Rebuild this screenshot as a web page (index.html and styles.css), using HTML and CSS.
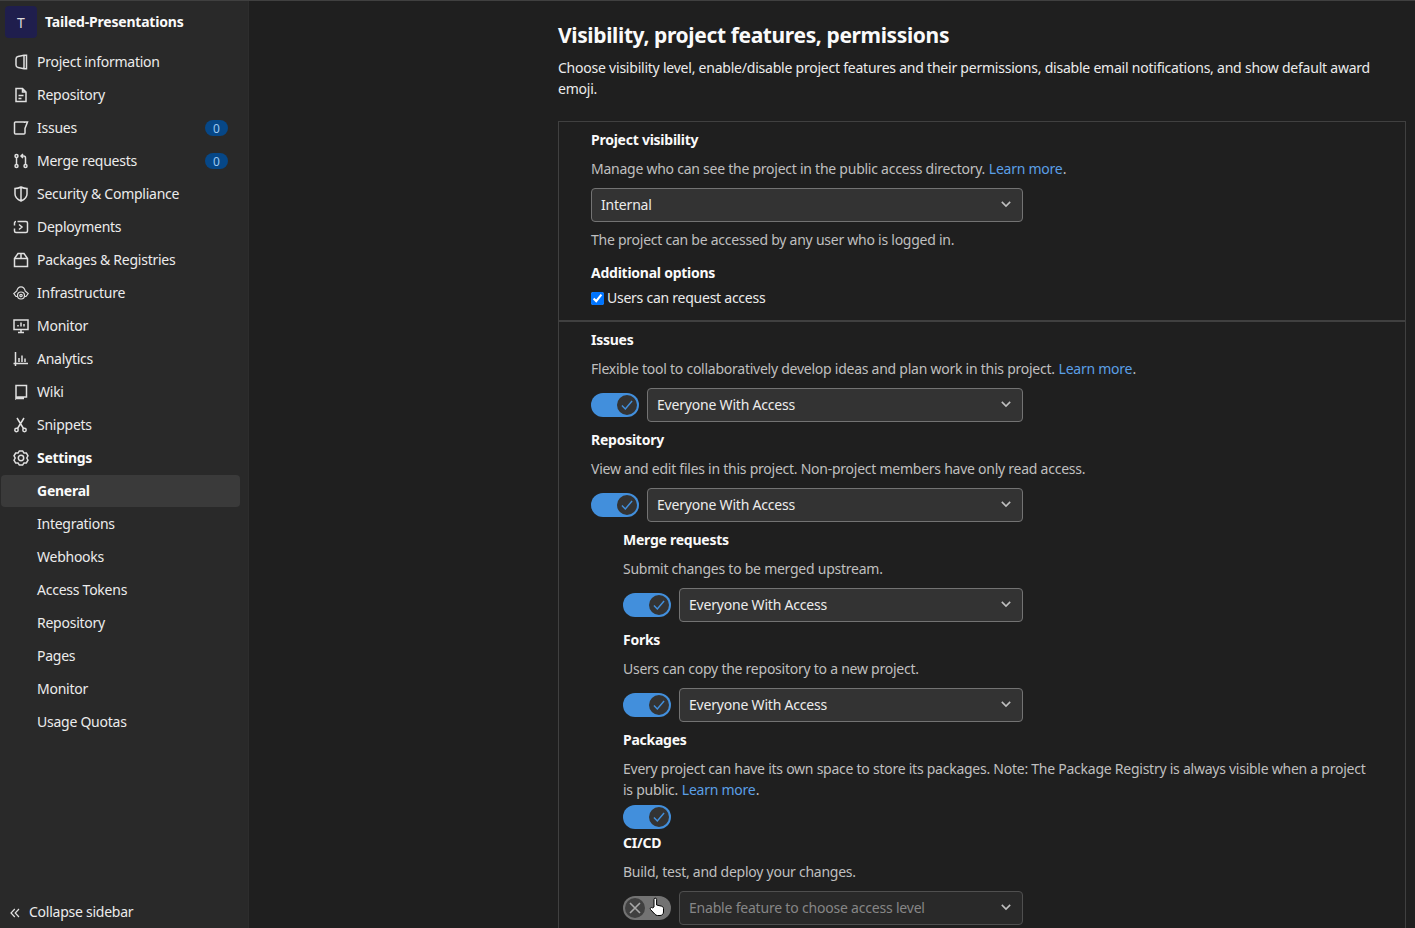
FILE: index.html
```html
<!DOCTYPE html>
<html lang="en">
<head>
  <meta charset="UTF-8">
  <title>General · Settings</title>
  <link rel="stylesheet" href="styles.css">
</head>
<body>
  <div class="layout">
    <aside class="sidebar">
      <div class="project">
        <span class="avatar">T</span>
        <span class="project-name">Tailed-Presentations</span>
      </div>
      <nav class="nav">
        <a class="nav-item"><svg class="icon" viewBox="0 0 16 16"><path d="M11 1.300h2.500v13.400H11L5 13.500c-1.500-.3-2-1-2-2.500V5c0-1.500.5-2.200 2-2.500zM11 1.300v13.400"/></svg>Project information</a>
        <a class="nav-item"><svg class="icon" viewBox="0 0 16 16"><path d="M3 1.500h6.500L13 5v9.500H3zM9.500 1.500V5H13M5.500 8.500h5M5.500 11.500h3"/></svg>Repository</a>
        <a class="nav-item"><svg class="icon" viewBox="0 0 16 16"><path d="M2.500 2H14.500L12 8.500V13a1 1 0 0 1-1 1H2.500a1 1 0 0 1-1-1V3a1 1 0 0 1 1-1zM11.500 2v1"/></svg>Issues<span class="badge">0</span></a>
        <a class="nav-item"><svg class="icon" viewBox="0 0 16 16"><circle cx="3.500" cy="3" r="1.500"/><circle cx="3.500" cy="13" r="1.500"/><circle cx="12.500" cy="13" r="1.500"/><path d="M3.500 4.500v7M12.500 11.500V5a2 2 0 0 0-2-2H8M10 1 8 3l2 2"/></svg>Merge requests<span class="badge">0</span></a>
        <a class="nav-item"><svg class="icon" viewBox="0 0 16 16"><path d="M8 1c2 1 4 1.500 6 1.500V8c0 3-2.500 5.500-6 7-3.500-1.500-6-4-6-7V2.500C4 2.500 6 2 8 1zM8 1v14"/></svg>Security &amp; Compliance</a>
        <a class="nav-item"><svg class="icon" viewBox="0 0 16 16"><path d="M4.500 2.500h8.500a1.500 1.500 0 0 1 1.500 1.500v8a1.500 1.500 0 0 1-1.500 1.500H3A1.500 1.500 0 0 1 1.500 12V9.500M1.500 6.500V4A1.500 1.500 0 0 1 3 2.500M6 5.500 9 8l-3 2.500"/></svg>Deployments</a>
        <a class="nav-item"><svg class="icon" viewBox="0 0 16 16"><path d="M1.500 6.500 5 1.500h6l3.500 5v8h-13zM1.500 6.500h13M8 1.500v5"/></svg>Packages &amp; Registries</a>
        <a class="nav-item"><svg class="icon thin" viewBox="0 0 16 16"><path d="M4.500 11.500H3L.8 8.500l3-2.500C4.300 3.500 6 1.800 8 1.800s3.700 1.700 4.200 4.200l3 2.500-2.200 3h-1.500"/><circle cx="8" cy="10.500" r="1.200"/><circle cx="8" cy="10.500" r="3.500"/></svg>Infrastructure</a>
        <a class="nav-item"><svg class="icon" viewBox="0 0 16 16"><path d="M1 2h14v9.500H1zM5 14.500h6M8 11.500v3M5 8.500V7M8 8.500V4.500M11 8.500V6"/></svg>Monitor</a>
        <a class="nav-item"><svg class="icon" viewBox="0 0 16 16"><path d="M2.500 1v14M0.500 12.500H15M6 11V7M9 11V4.500M12 11V7.500"/></svg>Analytics</a>
        <a class="nav-item"><svg class="icon" viewBox="0 0 16 16"><path d="M3 1.500h10.500v11.500H5a2 2 0 0 0-2 1zM3 13v1.500h8"/></svg>Wiki</a>
        <a class="nav-item"><svg class="icon" viewBox="0 0 16 16"><circle cx="3.500" cy="13" r="1.700"/><circle cx="11.500" cy="13" r="1.700"/><path d="M4.500 11.500 11 1M10.500 11.500 4 1"/></svg>Snippets</a>
        <a class="nav-item nav-item-bold"><svg class="icon" viewBox="0 0 16 16"><path d="M6.360.89h3.280l1.260 2.090h2.440l1.640 2.890L13.800 8l1.180 2.130-1.640 2.850H10.900l-1.260 2.130H6.360L5.100 13.020H2.660L1.020 10.130 2.200 8 1.020 5.870l1.640-2.850H5.100z"/><circle cx="8" cy="8" r="2.700"/></svg>Settings</a>
        <a class="nav-item sub-item active">General</a>
        <a class="nav-item sub-item">Integrations</a>
        <a class="nav-item sub-item">Webhooks</a>
        <a class="nav-item sub-item">Access Tokens</a>
        <a class="nav-item sub-item">Repository</a>
        <a class="nav-item sub-item">Pages</a>
        <a class="nav-item sub-item">Monitor</a>
        <a class="nav-item sub-item">Usage Quotas</a>
      </nav>
      <a class="collapse"><svg class="collapse-icon" viewBox="0 0 10 10"><path d="M4.800 1 1 5l3.800 4M9 1 5.200 5 9 9"/></svg>Collapse sidebar</a>
    </aside>

    <main class="content">
      <h2 class="title">Visibility, project features, permissions</h2>
      <p class="lead">Choose visibility level, enable/disable project features and their permissions, disable email notifications, and show default award emoji.</p>

      <div class="box">
        <section class="group first">
          <h5 class="label">Project visibility</h5>
          <p class="help">Manage who can see the project in the public access directory. <a class="link">Learn more</a>.</p>
          <div class="select full">Internal<svg class="chev" viewBox="0 0 10 10"><path d="M2 3.500 5 6.500l3-3"/></svg></div>
          <p class="help after">The project can be accessed by any user who is logged in.</p>
          <h5 class="label options">Additional options</h5>
          <label class="check"><input type="checkbox" checked>Users can request access</label>
        </section>

        <section class="group">
          <div class="feature">
            <h5 class="label">Issues</h5>
            <p class="help">Flexible tool to collaboratively develop ideas and plan work in this project. <a class="link">Learn more</a>.</p>
            <div class="control"><span class="toggle on"><span class="knob"><svg viewBox="0 0 16 16"><path d="M3.500 8.500 6.500 11.500 12.500 4.500"/></svg></span></span><div class="select">Everyone With Access<svg class="chev" viewBox="0 0 10 10"><path d="M2 3.500 5 6.500l3-3"/></svg></div></div>
          </div>
          <div class="feature">
            <h5 class="label">Repository</h5>
            <p class="help">View and edit files in this project. Non-project members have only read access.</p>
            <div class="control"><span class="toggle on"><span class="knob"><svg viewBox="0 0 16 16"><path d="M3.500 8.500 6.500 11.500 12.500 4.500"/></svg></span></span><div class="select">Everyone With Access<svg class="chev" viewBox="0 0 10 10"><path d="M2 3.500 5 6.500l3-3"/></svg></div></div>
          </div>
          <div class="nested">
            <div class="feature">
              <h5 class="label">Merge requests</h5>
              <p class="help">Submit changes to be merged upstream.</p>
              <div class="control"><span class="toggle on"><span class="knob"><svg viewBox="0 0 16 16"><path d="M3.500 8.500 6.500 11.500 12.500 4.500"/></svg></span></span><div class="select">Everyone With Access<svg class="chev" viewBox="0 0 10 10"><path d="M2 3.500 5 6.500l3-3"/></svg></div></div>
            </div>
            <div class="feature">
              <h5 class="label">Forks</h5>
              <p class="help">Users can copy the repository to a new project.</p>
              <div class="control"><span class="toggle on"><span class="knob"><svg viewBox="0 0 16 16"><path d="M3.500 8.500 6.500 11.500 12.500 4.500"/></svg></span></span><div class="select">Everyone With Access<svg class="chev" viewBox="0 0 10 10"><path d="M2 3.500 5 6.500l3-3"/></svg></div></div>
            </div>
            <div class="feature packages">
              <h5 class="label">Packages</h5>
              <p class="help">Every project can have its own space to store its packages. Note: The Package Registry is always visible when a project is public. <a class="link">Learn more</a>.</p>
              <div class="control"><span class="toggle on"><span class="knob"><svg viewBox="0 0 16 16"><path d="M3.500 8.500 6.500 11.500 12.500 4.500"/></svg></span></span></div>
            </div>
            <div class="feature">
              <h5 class="label">CI/CD</h5>
              <p class="help">Build, test, and deploy your changes.</p>
              <div class="control">
                <span class="toggle off"><span class="knob"><svg viewBox="0 0 16 16"><path d="M4 4l8 8M12 4l-8 8"/></svg></span>
                  <svg class="cursor" viewBox="0 0 18 20"><path d="M6 10V2.500a1.300 1.300 0 0 1 2.600 0V8l5 1.200c1.200.3 1.900 1.200 1.900 2.400V15c0 2-1.500 3.500-3.500 3.500H9.500c-1.200 0-2-.5-2.700-1.400L2.500 12.500c-.9-1.300.8-2.800 2-1.600z"/></svg>
                </span>
                <div class="select disabled">Enable feature to choose access level<svg class="chev" viewBox="0 0 10 10"><path d="M2 3.500 5 6.500l3-3"/></svg></div>
              </div>
            </div>
          </div>
        </section>
      </div>
    </main>
  </div>
</body>
</html>
```

FILE: styles.css
```css
* {
  box-sizing: border-box;
}
html, body {
  height: 100%;
}
body {
  margin: 0;
  font-family: 'Noto Sans', 'Open Sans', sans-serif;
  font-size: 14px;
  background: #1f1f1f;
  color: #fafafa;
  overflow: hidden;
}
p, h2, h5 {
  margin: 0;
}
.layout {
  display: flex;
  height: 928px;
  border-top: 1px solid #404040;
}
.sidebar {
  width: 249px;
  flex: none;
  display: flex;
  flex-direction: column;
  background: #292929;
  border-right: 1px solid #2d2d2d;
  position: relative;
}
.project {
  display: flex;
  align-items: center;
  gap: 8px;
  height: 32px;
  margin: 5px 0 0 5px;
}
.avatar {
  width: 32px;
  height: 32px;
  border-radius: 4px;
  background: #1f1e4d;
  color: #dbdbdb;
  display: flex;
  align-items: center;
  justify-content: center;
  font-size: 14px;
}
.project-name {
  font-weight: 700;
  font-size: 14px;
  letter-spacing: -0.2px;
  padding-bottom: 2px;
}
.nav {
  margin-top: 8px;
  display: flex;
  flex-direction: column;
  gap: 1px;
  padding-left: 1px;
}
.nav-item {
  display: flex;
  align-items: center;
  height: 32px;
  width: 239px;
  padding: 0 0 2px 12px;
  color: #ececec;
  border-radius: 4px;
  letter-spacing: -0.25px;
  white-space: nowrap;
}
.nav-item-bold {
  font-weight: 700;
  color: #fafafa;
  letter-spacing: -0.3px;
}
.icon {
  width: 16px;
  height: 16px;
  margin: 2px 8px 0 0;
  flex: none;
  fill: none;
  stroke: #e0e0e0;
  stroke-width: 1.5;
}
.icon.thin {
  stroke-width: 1.2;
}
.sub-item {
  padding-left: 36px;
}
.active {
  background: #3a3a3a;
  font-weight: 700;
  color: #fafafa;
}
.badge {
  margin: 2px 12px 0 auto;
  width: 23px;
  height: 16px;
  border-radius: 8px;
  background: #064787;
  color: #9dc7f1;
  font-size: 12px;
  display: flex;
  align-items: center;
  justify-content: center;
  letter-spacing: 0;
}
.collapse {
  position: absolute;
  left: 10px;
  bottom: 7px;
  display: flex;
  align-items: center;
  gap: 9px;
  color: #ececec;
  letter-spacing: -0.25px;
}
.collapse-icon {
  width: 10px;
  height: 10px;
  margin-top: 2px;
  fill: none;
  stroke: #e0e0e0;
  stroke-width: 1.2;
}
.content {
  flex: none;
  width: 848px;
  margin-left: 309px;
}
.title {
  font-size: 21px;
  font-weight: 700;
  line-height: 28px;
  margin-top: 20px;
  color: #fafafa;
  letter-spacing: -0.37px;
}
.lead {
  margin-top: 8px;
  line-height: 21px;
  color: #ececec;
  letter-spacing: -0.225px;
}
.box {
  margin-top: 22px;
  border: 1px solid #404040;
  border-bottom: 0;
}
.group {
  padding: 8px 32px 0;
}
.group.first {
  height: 200px;
  border-bottom: 2px solid #404040;
}
.label {
  font-size: 14px;
  font-weight: 700;
  line-height: 20px;
  color: #fafafa;
  letter-spacing: -0.25px;
}
.help {
  margin-top: 8px;
  line-height: 21px;
  color: #bfbfbf;
  letter-spacing: -0.25px;
}
.help.after {
  margin-top: 7px;
}
.options {
  margin-top: 13px;
}
.link {
  color: #5b9fe6;
  margin: 0 0.4px;
}
.select {
  position: relative;
  flex: 1;
  height: 34px;
  line-height: 32px;
  padding-left: 9px;
  background: #333;
  border: 1px solid #737373;
  border-radius: 4px;
  color: #ececec;
  letter-spacing: -0.2px;
}
.select.full {
  width: 432px;
  flex: none;
  margin-top: 9px;
}
.select.disabled {
  background: #292929;
  border-color: #4f4f4f;
  color: #868686;
}
.chev {
  position: absolute;
  right: 9px;
  top: 8px;
  width: 14px;
  height: 14px;
  fill: none;
  stroke: #bfbfbf;
  stroke-width: 1.1;
}
.check {
  display: flex;
  align-items: center;
  gap: 3px;
  line-height: 20px;
  margin-top: 5px;
  color: #ececec;
  letter-spacing: -0.25px;
}
.check input {
  margin: 0;
  width: 13px;
  height: 13px;
}
.feature {
  height: 100px;
}
.feature.packages {
  height: 103px;
}
.control {
  display: flex;
  align-items: center;
  gap: 8px;
  width: 432px;
  margin-top: 9px;
}
.nested {
  padding-left: 32px;
}
.nested .control {
  width: 400px;
}
.packages .control {
  margin-top: 5px;
}
.toggle {
  position: relative;
  flex: none;
  width: 48px;
  height: 24px;
  border-radius: 12px;
}
.toggle.on {
  background: #428fdc;
}
.toggle.off {
  background: #737373;
}
.knob {
  position: absolute;
  top: 2px;
  width: 20px;
  height: 20px;
  border-radius: 50%;
  background: #333;
  display: flex;
  align-items: center;
  justify-content: center;
}
.on .knob {
  right: 2px;
}
.off .knob {
  left: 2px;
  background: #404040;
}
.knob svg {
  width: 18px;
  height: 18px;
  flex: none;
  fill: none;
  stroke: #428fdc;
  stroke-width: 1.3;
}
.off .knob svg {
  width: 20px;
  height: 20px;
  stroke: #a8a8a8;
}
.cursor {
  position: absolute;
  left: 25px;
  top: 1px;
  width: 18px;
  height: 20px;
  fill: #fff;
  stroke: #000;
  stroke-width: 1;
}
```
